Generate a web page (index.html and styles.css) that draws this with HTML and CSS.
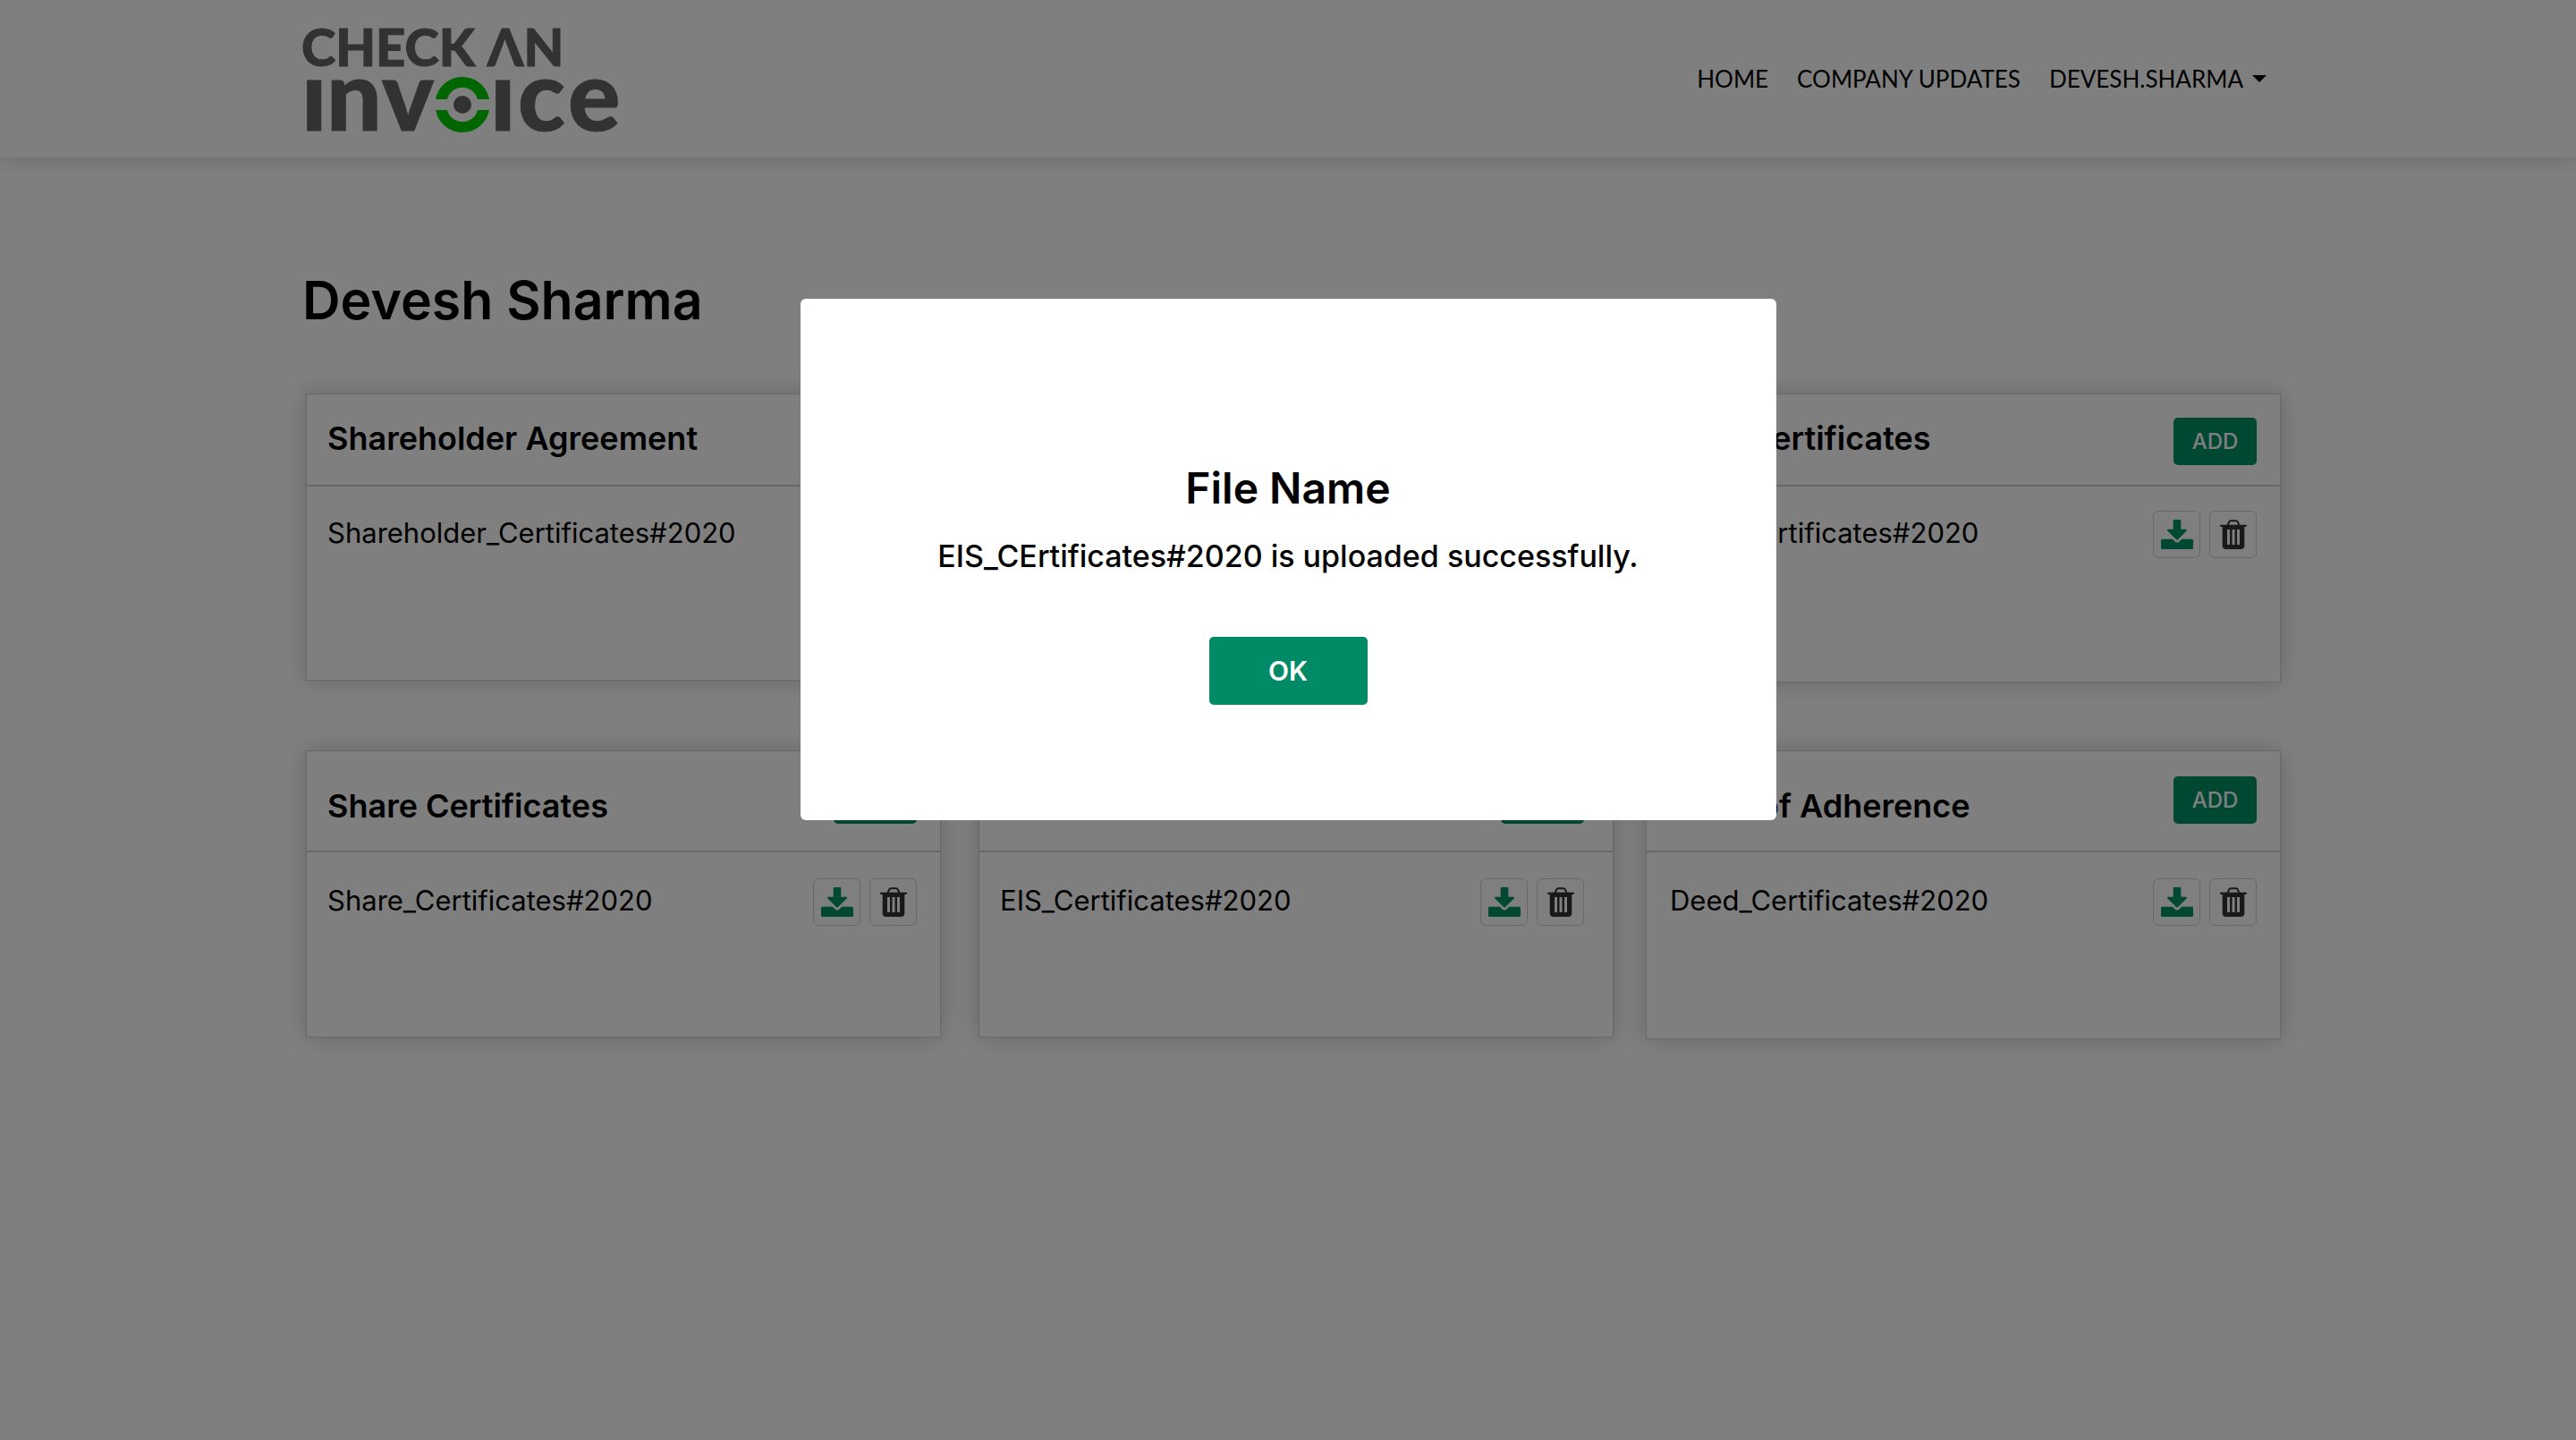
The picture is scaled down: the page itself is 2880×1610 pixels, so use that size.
FILE: index.html
```html
<!DOCTYPE html>
<html lang="en">
<head>
<meta charset="utf-8">
<meta name="viewport" content="width=device-width, initial-scale=1">
<title>Check An Invoice – Devesh Sharma</title>
<link rel="stylesheet" href="styles.css">
</head>
<body>
<svg class="sprite" aria-hidden="true">
  <symbol id="icon-download" viewBox="0 0 36 33">
    <path d="M14.700 0h6.600a1 1 0 0 1 1 1v9.700h5.700a1 1 0 0 1 .7 1.700l-9.700 9.700a1.500 1.500 0 0 1-2.100 0L7.300 12.400a1 1 0 0 1 .7-1.700h5.700V1a1 1 0 0 1 1-1z"/>
    <path d="M1.500 21.700h11.300l2.800 2.700a3.500 3.500 0 0 0 4.900 0l2.800-2.700h11.200a1.500 1.500 0 0 1 1.500 1.500v8.300a1.500 1.500 0 0 1-1.500 1.500h-33A1.500 1.500 0 0 1 0 31.500v-8.300a1.500 1.500 0 0 1 1.500-1.500z"/>
  </symbol>
  <symbol id="icon-trash" viewBox="0 0 30 33">
    <path d="M8.500 6.500 10 2.800A2.500 2.500 0 0 1 12.300 1.200h5.400A2.500 2.500 0 0 1 20 2.800l1.500 3.700" fill="none" stroke="currentColor" stroke-width="2"/>
    <path d="M.8 5.700h28.400a.8.8 0 0 1 .8.8v.6a.8.8 0 0 1-.8.8h-1.900V29a4 4 0 0 1-4 4H6.700a4 4 0 0 1-4-4V7.900H.8A.8.8 0 0 1 0 7.100v-.6a.8.8 0 0 1 .8-.8zM8 11v17h3V11zm5.500 0v17h3V11zm5.500 0v17h3V11z" fill-rule="evenodd"/>
  </symbol>
</svg>

<header class="site-header">
  <div class="container header-row">
    <a class="logo" href="#" aria-label="Check An Invoice">
      <svg class="logo-art" viewBox="0 0 354 128" aria-hidden="true">
        <g class="logo-ink">
          <text class="logo-small" x="-3" y="50">CHECK ΛN</text>
          <text class="logo-large" x="-3 25 87" y="122">ınv</text>
          <circle cx="177" cy="93" r="10"/>
          <text class="logo-large" x="208 239 295" y="122">ıce</text>
        </g>
        <path class="logo-eye" d="M147 87a30.500 30.500 0 0 1 60 0h-13a17.500 17.500 0 0 0-34 0zM147 99a30.500 30.500 0 0 0 60 0h-13a17.500 17.500 0 0 1-34 0z"/>
      </svg>
    </a>
    <nav class="nav">
      <a class="nav-item" href="#">HOME</a>
      <a class="nav-item" href="#">COMPANY UPDATES</a>
      <button class="nav-item nav-menu" type="button">DEVESH.SHARMA<span class="caret"></span></button>
    </nav>
  </div>
</header>

<main class="container page">
  <h1 class="page-title">Devesh Sharma</h1>
  <div class="cards">
    <section class="card">
      <div class="card-head"><h2 class="card-title">Shareholder Agreement</h2><button class="add" type="button">ADD</button></div>
      <div class="file"><span class="file-name">Shareholder_Certificates#2020</span>
        <div class="actions"><button class="action download" type="button" aria-label="Download"><svg class="icon-download"><use href="#icon-download"/></svg></button><button class="action trash" type="button" aria-label="Delete"><svg class="icon-trash"><use href="#icon-trash"/></svg></button></div></div>
    </section>
    <section class="card">
      <div class="card-head"><h2 class="card-title">Investor Agreement</h2><button class="add" type="button">ADD</button></div>
      <div class="file"><span class="file-name">Investor_Certificates#2020</span>
        <div class="actions"><button class="action download" type="button" aria-label="Download"><svg class="icon-download"><use href="#icon-download"/></svg></button><button class="action trash" type="button" aria-label="Delete"><svg class="icon-trash"><use href="#icon-trash"/></svg></button></div></div>
    </section>
    <section class="card">
      <div class="card-head"><h2 class="card-title">SEIS Certificates</h2><button class="add" type="button">ADD</button></div>
      <div class="file"><span class="file-name">SEIS_Certificates#2020</span>
        <div class="actions"><button class="action download" type="button" aria-label="Download"><svg class="icon-download"><use href="#icon-download"/></svg></button><button class="action trash" type="button" aria-label="Delete"><svg class="icon-trash"><use href="#icon-trash"/></svg></button></div></div>
    </section>
    <section class="card tall">
      <div class="card-head"><h2 class="card-title">Share Certificates</h2><button class="add" type="button">ADD</button></div>
      <div class="file"><span class="file-name">Share_Certificates#2020</span>
        <div class="actions"><button class="action download" type="button" aria-label="Download"><svg class="icon-download"><use href="#icon-download"/></svg></button><button class="action trash" type="button" aria-label="Delete"><svg class="icon-trash"><use href="#icon-trash"/></svg></button></div></div>
    </section>
    <section class="card tall">
      <div class="card-head"><h2 class="card-title">EIS Certificates</h2><button class="add" type="button">ADD</button></div>
      <div class="file"><span class="file-name">EIS_Certificates#2020</span>
        <div class="actions"><button class="action download" type="button" aria-label="Download"><svg class="icon-download"><use href="#icon-download"/></svg></button><button class="action trash" type="button" aria-label="Delete"><svg class="icon-trash"><use href="#icon-trash"/></svg></button></div></div>
    </section>
    <section class="card tall">
      <div class="card-head"><h2 class="card-title">Deed of Adherence</h2><button class="add" type="button">ADD</button></div>
      <div class="file"><span class="file-name">Deed_Certificates#2020</span>
        <div class="actions"><button class="action download" type="button" aria-label="Download"><svg class="icon-download"><use href="#icon-download"/></svg></button><button class="action trash" type="button" aria-label="Delete"><svg class="icon-trash"><use href="#icon-trash"/></svg></button></div></div>
    </section>
  </div>
</main>

<div class="backdrop">
  <div class="modal" role="dialog" aria-modal="true" aria-labelledby="modal-title">
    <h2 class="modal-title" id="modal-title">File Name</h2>
    <p class="modal-text">EIS_CErtificates#2020 is uploaded successfully.</p>
    <button class="ok" type="button">OK</button>
  </div>
</div>
</body>
</html>
```
FILE: styles.css
```css
* { box-sizing: border-box; }

body {
  margin: 0;
  background: #fff;
  color: #000;
  font-family: Inter, "Open Sans", sans-serif;
}

h1, h2, p { margin: 0; }

button {
  margin: 0;
  padding: 0;
  border: 0;
  background: none;
  color: inherit;
  font-family: inherit;
  cursor: pointer;
}

.sprite { position: absolute; width: 0; height: 0; }

.container {
  max-width: 2220px;
  margin: 0 auto;
  padding-left: 12px;
}

/* Header */
.site-header { box-shadow: 0 2px 20px rgba(0, 0, 0, .16); }

.header-row {
  display: flex;
  align-items: center;
  justify-content: space-between;
  min-height: 176px;
  padding-left: 10px;
}

.logo { display: block; }
.logo-art { display: block; width: 354px; height: 128px; overflow: visible; }
.logo-ink { fill: #646467; font-family: Lato, sans-serif; font-weight: 900; }
.logo-small { font-size: 58px; stroke: #646467; stroke-width: 1px; }
.logo-large { font-size: 109px; stroke: #646467; stroke-width: 1px; }
.logo-eye { fill: #0c0; }

.nav {
  display: flex;
  align-items: center;
  gap: 32px;
  padding-right: 16px;
}

.nav-item {
  color: #000;
  font-family: Lato, sans-serif;
  font-size: 26px;
  font-weight: 400;
  line-height: 32px;
  text-decoration: none;
}

.nav-menu { display: flex; align-items: center; gap: 10px; }
.caret { border: 8px solid transparent; border-top-color: #000; border-bottom: 0; }

/* Document cards */
.page { padding-top: 124px; padding-bottom: 76px; }
.page-title { margin: 0 0 68px -4px; font-size: 59px; font-weight: 600; line-height: 72px; }

.cards {
  display: grid;
  grid-template-columns: 716fr 710fr 710fr;
  gap: 76px 36px;
  align-items: start;
}

.card {
  --left: 23px;
  --right: 26px;
  min-height: 321px;
  border: 1px solid #d0d0d0;
  box-shadow: 0 0 24px rgba(0, 0, 0, .2);
  background: #fff;
}
.card:nth-child(3n+1) { margin-right: 6px; }
.card:nth-child(3n+2) { --right: 32px; }
.card:nth-child(3n) { --left: 26px; min-height: 323px; }

.card-head, .file {
  display: flex;
  align-items: flex-start;
  justify-content: space-between;
  padding: 26px var(--right) 0 var(--left);
}
.card-head { min-height: 103px; border-bottom: 2px solid #d0d0d0; }
.card-title { font-size: 36px; font-weight: 600; line-height: 46px; }
.file { padding-top: 27px; }
.file-name { padding-top: 6px; font-size: 31px; font-weight: 400; line-height: 38px; }

.tall .card-head { min-height: 113px; padding-top: 28px; }
.tall .card-title { padding-top: 10px; }
.tall .file { padding-top: 29px; }

.add {
  width: 93px;
  height: 53px;
  border-radius: 5px;
  background: #009064;
  color: #fff;
  font-size: 24px;
  font-weight: 500;
}

.actions { display: flex; gap: 10px; }
.action {
  display: flex;
  align-items: center;
  justify-content: center;
  width: 53px;
  height: 53px;
  border: 1px solid #d0d0d0;
  border-radius: 6px;
  fill: currentColor;
}
.download { color: #009064; }
.trash { color: #333; }
.icon-download { width: 36px; height: 33px; }
.icon-trash { width: 30px; height: 33px; }

/* Confirmation dialog */
.backdrop {
  position: fixed;
  inset: 0;
  display: flex;
  align-items: flex-start;
  justify-content: center;
  padding-top: 334px;
  background: rgba(0, 0, 0, .5);
}

.modal {
  display: flex;
  flex-direction: column;
  align-items: center;
  width: 100%;
  max-width: 1091px;
  padding: 183px 24px 129px;
  border-radius: 6px;
  background: #fff;
  text-align: center;
}
.modal-title { margin-bottom: 26px; font-size: 48px; font-weight: 600; line-height: 58px; }
.modal-text { margin-bottom: 69px; font-size: 34px; font-weight: 500; line-height: 42px; }
.ok {
  width: 177px;
  height: 76px;
  border-radius: 5px;
  background: #008a65;
  color: #fff;
  font-size: 30px;
  font-weight: 600;
}
```
